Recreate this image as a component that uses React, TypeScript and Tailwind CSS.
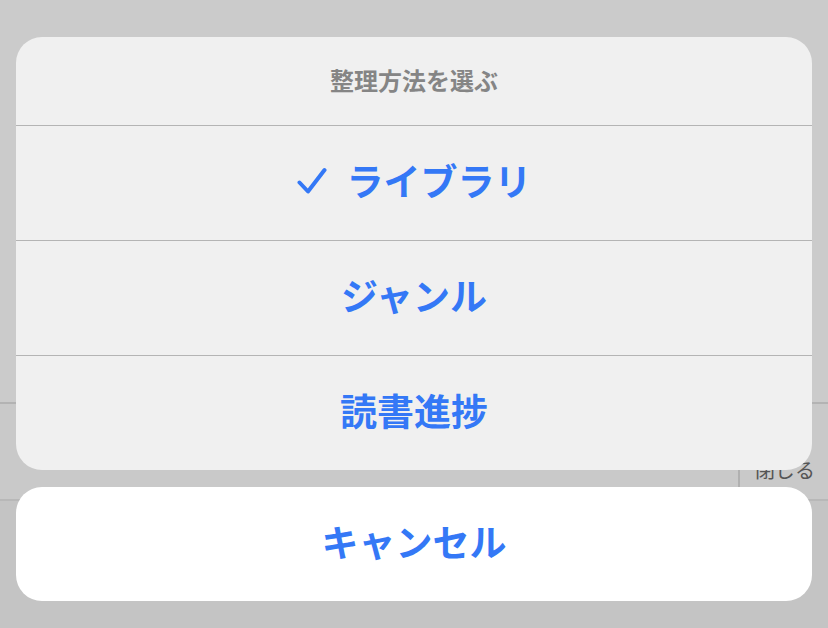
const font = { fontFamily: '"Noto Sans CJK JP", "Noto Sans", sans-serif' };

const options = [
  { label: "ライブラリ", checked: true },
  { label: "ジャンル", checked: false },
  { label: "読書進捗", checked: false },
];

function Check() {
  return (
    <svg width="30" height="28" viewBox="0 0 30 28" fill="none" aria-hidden="true">
      <path
        d="M2.5 15.5 L11 24.5 L27.5 3"
        stroke="#3478f6"
        strokeWidth="4"
        strokeLinecap="round"
        strokeLinejoin="round"
      />
    </svg>
  );
}

export default function App() {
  return (
    <div className="relative h-[628px] w-[828px] overflow-hidden bg-[#cbcbcb]" style={font}>
      {/* page behind the sheet */}
      <div className="flex h-full flex-col">
        <div className="h-[404px] border-b-2 border-[#b3b3b3]" />
        <div className="flex h-[95px] justify-end bg-[#c9c9c9]">
          <div className="flex w-[90px] items-end border-l-2 border-[#b0b0b0] pb-[19px] pl-[15px] text-[20px] leading-none text-[#555]">
            閉じる
          </div>
        </div>
        <div className="flex-1 border-t-2 border-[#b8b8b8] bg-[#c4c4c4]" />
      </div>

      {/* action sheet */}
      <div className="absolute inset-x-4 top-[37px] flex flex-col gap-[17px]">
        <div className="overflow-hidden rounded-[26px] bg-[#f0f0f0]">
          <div className="flex h-[88px] items-center justify-center pb-[2px] text-[24px] font-bold text-[#858585]">
            整理方法を選ぶ
          </div>
          {options.map((o) => (
            <div
              key={o.label}
              className="flex h-[115px] items-center justify-center gap-[20px] border-t border-[#b4b4b4] pb-[5px] text-[37px] font-bold text-[#3478f6]"
            >
              {o.checked && <Check />}
              <span>{o.label}</span>
            </div>
          ))}
        </div>
        <div className="flex h-[114px] items-center justify-center rounded-[26px] bg-white pb-[4px] text-[37px] font-bold text-[#3478f6]">
          キャンセル
        </div>
      </div>
    </div>
  );
}
